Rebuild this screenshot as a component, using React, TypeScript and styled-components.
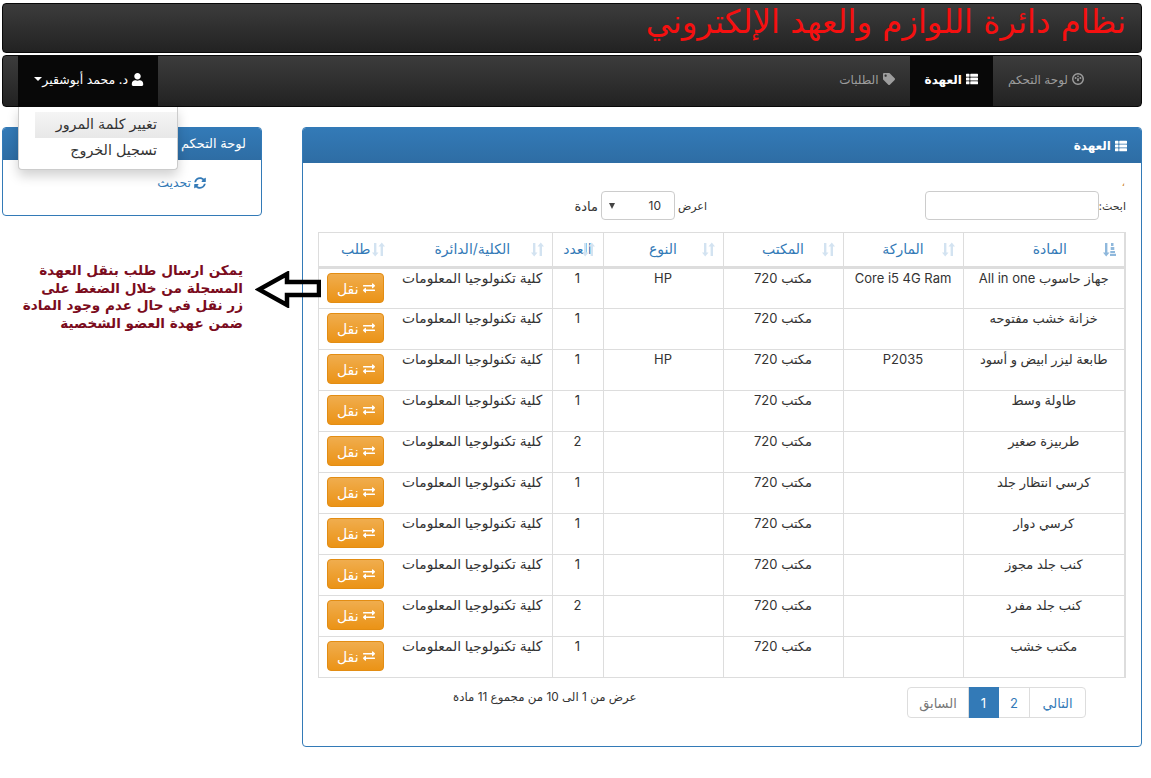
import React from "react";
import styled, { createGlobalStyle } from "styled-components";
import { FaExchangeAlt, FaSyncAlt, FaTag, FaThList, FaUser } from "react-icons/fa";

const GlobalStyle = createGlobalStyle`
  html, body {
    margin: 0;
    padding: 0;
    background: #fff;
  }
  body {
    font-family: Inter, "DejaVu Sans", sans-serif;
    font-size: 13px;
    color: #333;
  }
`;

const rows = [
  ["جهاز حاسوب All in one", "Core i5 4G Ram", "مكتب 720", "HP", "1"],
  ["خزانة خشب مفتوحه", "", "مكتب 720", "", "1"],
  ["طابعة ليزر ابيض و أسود", "P2035", "مكتب 720", "HP", "1"],
  ["طاولة وسط", "", "مكتب 720", "", "1"],
  ["طربيزة صغير", "", "مكتب 720", "", "2"],
  ["كرسي انتظار جلد", "", "مكتب 720", "", "1"],
  ["كرسي دوار", "", "مكتب 720", "", "1"],
  ["كنب جلد مجوز", "", "مكتب 720", "", "1"],
  ["كنب جلد مفرد", "", "مكتب 720", "", "2"],
  ["مكتب خشب", "", "مكتب 720", "", "1"],
];

const SortIcon = ({ active }: { active?: boolean }) => (
  <SortSvg viewBox="0 0 13 15" $active={active}>
    <path d="M2 1h2.4v9.5H6.5L3.2 14.5 0 10.5h2z" />
    {active ? (
      <path d="M8 1h2.5v3H8zM7.7 5h3.6v3H7.7zM7.3 9H12v2H7.3zM7 11.7h6v2.3H7z" />
    ) : (
      <path d="M9.8 .5L13 4.5h-2V14H8.6V4.5H6.5z" />
    )}
  </SortSvg>
);

// glyphicon-dashboard: a ring with dial dots and a needle
const DashboardIcon = () => (
  <svg viewBox="0 0 12 12" width={12} height={12} fill="currentColor">
    <path
      fillRule="evenodd"
      d="M6 0a6 6 0 1 1 0 12A6 6 0 0 1 6 0zm0 1.5a4.5 4.5 0 1 0 0 9 4.5 4.5 0 0 0 0-9z"
    />
    <circle cx="3.6" cy="5" r="1" />
    <circle cx="8.4" cy="5" r="1" />
    <circle cx="6" cy="3.4" r=".8" />
    <path d="M5 7.2a1 1 0 0 0 2 0L6.5 5h-1z" />
  </svg>
);

const App = () => {
  return (
    <Page dir="rtl">
      <GlobalStyle />
      <TitleBar>
        <Title>نظام دائرة اللوازم والعهد الإلكتروني</Title>
      </TitleBar>
      <Navbar>
        <NavLinks>
          <NavItem>
            <DashboardIcon /> لوحة التحكم
          </NavItem>
          <NavItem $active>
            <FaThList size={12} /> العهدة
          </NavItem>
          <NavItem>
            <FaTag size={12} /> الطلبات
          </NavItem>
        </NavLinks>
        <UserMenu>
          <UserToggle>
            <FaUser size={13} /> د. محمد أبوشقير
            <Caret />
          </UserToggle>
          <Dropdown>
            <DropdownItem $hover>تغيير كلمة المرور</DropdownItem>
            <DropdownItem>تسجيل الخروج</DropdownItem>
          </Dropdown>
        </UserMenu>
      </Navbar>

      <Columns>
        <MainPanel>
          <PanelHeading>
            <FaThList size={12} /> العهدة
          </PanelHeading>
          <PanelBody>
            <Tick>،</Tick>
            <Controls>
              <SearchLabel>
                ابحث:
                <SearchInput />
              </SearchLabel>
              <LengthLabel>
                <LengthText $size={11}>اعرض</LengthText>
                <LengthSelect>
                  <span>10</span>
                  <SelectArrow />
                </LengthSelect>
                <LengthText $size={13}>مادة</LengthText>
              </LengthLabel>
            </Controls>
            <Table>
              <colgroup>
                <col width={162} />
                <col width={120} />
                <col width={120} />
                <col width={120} />
                <col width={51} />
                <col width={159} />
                <col width={75} />
              </colgroup>
              <thead>
                <tr>
                  <HeadCell>
                    المادة
                    <SortIcon active />
                  </HeadCell>
                  <HeadCell>
                    الماركة
                    <SortIcon />
                  </HeadCell>
                  <HeadCell>
                    المكتب
                    <SortIcon />
                  </HeadCell>
                  <HeadCell>
                    النوع
                    <SortIcon />
                  </HeadCell>
                  <HeadCell>
                    العدد
                    <SortIcon />
                  </HeadCell>
                  <HeadCell $open>
                    الكلية/الدائرة
                    <SortIcon />
                  </HeadCell>
                  <HeadCell $closed>
                    طلب
                    <SortIcon />
                  </HeadCell>
                </tr>
              </thead>
              <tbody>
                {rows.map((r, i) => (
                  <tr key={i}>
                    {r.map((c, j) => (
                      <Cell key={j}>{c}</Cell>
                    ))}
                    <Cell $open>كلية تكنولوجيا المعلومات</Cell>
                    <Cell $closed>
                      <MoveButton>
                        <FaExchangeAlt size={12} /> نقل
                      </MoveButton>
                    </Cell>
                  </tr>
                ))}
              </tbody>
            </Table>
            <Footer>
              <Pagination>
                <PageLink $kind="next">التالي</PageLink>
                <PageLink $kind="num">2</PageLink>
                <PageLink $kind="current">1</PageLink>
                <PageLink $kind="prev">السابق</PageLink>
              </Pagination>
              <Info>عرض من 1 الى 10 من مجموع 11 مادة</Info>
            </Footer>
          </PanelBody>
        </MainPanel>

        <SideColumn>
          <SidePanel>
            <SideHeading>لوحة التحكم</SideHeading>
            <SideBody>
              <RefreshLink>
                <FaSyncAlt size={12} /> تحديث
              </RefreshLink>
            </SideBody>
          </SidePanel>
          <Note>
            يمكن ارسال طلب بنقل العهدة
            <br />
            المسجلة من خلال الضغط على
            <br />
            زر نقل في حال عدم وجود المادة
            <br />
            ضمن عهدة العضو الشخصية
          </Note>
        </SideColumn>
      </Columns>

      <Arrow viewBox="0 0 66 37">
        <path
          d="M64 11H32V3L4 18.5 32 34V24h32z"
          fill="none"
          stroke="#000"
          strokeWidth="4.5"
        />
      </Arrow>
    </Page>
  );
};

export default App;

const widths: Record<string, string> = { next: "57px", num: "32px", current: "31px", prev: "62px" };

const Page = styled.div`
  position: relative;
  width: 1151px;
  height: 778px;
  overflow: hidden;
  box-sizing: border-box;
  padding: 3px 9px 0 2px;
`;

const TitleBar = styled.div`
  height: 50px;
  box-sizing: border-box;
  border: 1px solid #080808;
  border-radius: 4px;
  background: linear-gradient(to bottom, #3c3c3c, #222);
  padding: 0 15px;
`;

const Title = styled.h1`
  margin: 0;
  font-family: "DejaVu Sans", sans-serif;
  font-size: 32.3px;
  font-weight: 400;
  line-height: 36px;
  color: #f51010;
`;

const Navbar = styled.div`
  display: flex;
  justify-content: space-between;
  height: 52px;
  margin-top: 2px;
  box-sizing: border-box;
  border: 1px solid #080808;
  border-radius: 4px;
  background: linear-gradient(to bottom, #3c3c3c, #222);
  padding: 0 15px;
`;

const NavLinks = styled.div`
  display: flex;
  margin-right: 27px;
`;

const NavItem = styled.div<{ $active?: boolean }>`
  display: flex;
  align-items: center;
  gap: 4px;
  padding: 0 15px 4px;
  font-size: 12px;
  color: ${(p) => (p.$active ? "#fff" : "#9d9d9d")};
  background: ${(p) => (p.$active ? "#080808" : "transparent")};
  font-weight: ${(p) => (p.$active ? 700 : 400)};
`;

const UserMenu = styled.div`
  position: relative;
  display: flex;
`;

const UserToggle = styled.div`
  display: flex;
  align-items: center;
  gap: 3px;
  width: 140px;
  box-sizing: border-box;
  padding: 0 14px 4px 0;
  background: #080808;
  color: #fff;
  font-size: 12.5px;
`;

const Caret = styled.span`
  width: 0;
  height: 0;
  margin-right: -3px;
  border-left: 4px solid transparent;
  border-right: 4px solid transparent;
  border-top: 4px solid #fff;
`;

const Dropdown = styled.div`
  position: absolute;
  top: 51px;
  left: 0;
  z-index: 5;
  width: 160px;
  height: 63px;
  box-sizing: border-box;
  padding: 5px 0;
  background: #fff;
  border: 1px solid #ccc;
  border-top: 0;
  border-radius: 0 0 4px 4px;
  box-shadow: 0 6px 12px rgba(0, 0, 0, 0.18);
`;

const DropdownItem = styled.div<{ $hover?: boolean }>`
  height: 26px;
  line-height: 24px;
  margin-left: 16px;
  padding-right: 20px;
  font-size: 14.3px;
  color: #333;
  background: ${(p) => (p.$hover ? "linear-gradient(to bottom, #f5f5f5, #e8e8e8)" : "transparent")};
`;

const Columns = styled.div`
  display: flex;
  gap: 40px;
  margin-top: 20px;
  align-items: flex-start;
`;

const MainPanel = styled.div`
  width: 840px;
  height: 620px;
  box-sizing: border-box;
  border: 1px solid #337ab7;
  border-radius: 4px;
  overflow: hidden;
`;

const PanelHeading = styled.div`
  display: flex;
  align-items: center;
  gap: 4px;
  height: 35px;
  padding: 0 14px;
  color: #fff;
  font-size: 12px;
  font-weight: 700;
  background: linear-gradient(to bottom, #337ab7, #2e6da4);
`;

const PanelBody = styled.div`
  position: relative;
  padding: 28px 15px 0;
`;

const Tick = styled.span`
  position: absolute;
  top: 13px;
  right: 16px;
  font-size: 10px;
  color: #c87a20;
`;

const Controls = styled.div`
  display: flex;
  align-items: center;
  height: 29px;
  margin-bottom: 12px;
  font-size: 12px;
`;

const SearchLabel = styled.label`
  display: flex;
  align-items: center;
  width: 434px;
  font-size: 11px;
`;

const SearchInput = styled.div`
  width: 174px;
  height: 29px;
  box-sizing: border-box;
  border: 1px solid #ccc;
  border-radius: 4px;
`;

const LengthLabel = styled.label`
  display: flex;
  align-items: center;
  gap: 3px;
  margin-right: -15px;
`;

const LengthText = styled.span<{ $size: number }>`
  font-size: ${(p) => p.$size}px;
`;

const LengthSelect = styled.div`
  display: flex;
  align-items: center;
  justify-content: space-between;
  width: 74px;
  height: 29px;
  box-sizing: border-box;
  padding: 0 13px 0 4px;
  border: 1px solid #ccc;
  border-radius: 4px;
  font-size: 12px;
`;

const SelectArrow = styled.span`
  width: 0;
  height: 0;
  border-left: 3px solid transparent;
  border-right: 3px solid transparent;
  border-top: 6px solid #444;
  margin-left: 3px;
`;

const Table = styled.table`
  width: 808px;
  table-layout: fixed;
  border-collapse: collapse;
  border: 1px solid #ddd;
  border-right-width: 2px;
  font-size: 13px;
`;

const HeadCell = styled.th<{ $open?: boolean; $closed?: boolean }>`
  position: relative;
  height: 35px;
  padding: 0 0 2px;
  box-sizing: border-box;
  text-align: center;
  font-size: 14px;
  font-weight: 400;
  color: #337ab7;
  border: 1px solid #ddd;
  border-bottom: 3px solid #ddd;
  ${(p) => p.$open && "border-left: 0;"}
  ${(p) => p.$closed && "border-right: 0;"}
  &:first-child {
    padding-left: 12px;
  }
`;

const SortSvg = styled.svg<{ $active?: boolean }>`
  position: absolute;
  right: 8px;
  top: 9px;
  width: 13px;
  height: 15px;
  fill: ${(p) => (p.$active ? "#8fb8dc" : "#d3e3f1")};
`;

const Cell = styled.td<{ $open?: boolean; $closed?: boolean }>`
  height: 41px;
  padding: ${(p) => (p.$closed ? "4px" : "1px")} 0 0;
  box-sizing: border-box;
  vertical-align: top;
  text-align: center;
  border: 1px solid #ddd;
  color: #333;
  ${(p) => p.$open && "border-left: 0; font-size: 13.8px;"}
  ${(p) => p.$closed && "border-right: 0;"}
`;

const MoveButton = styled.div`
  display: inline-flex;
  align-items: center;
  justify-content: center;
  gap: 4px;
  width: 57px;
  height: 30px;
  box-sizing: border-box;
  border: 1px solid #e38d13;
  border-radius: 4px;
  color: #fff;
  font-size: 14px;
  background: linear-gradient(to bottom, #f0ad4e, #eb9316);
`;

const Footer = styled.div`
  display: flex;
  align-items: flex-start;
  justify-content: space-between;
  padding: 9px 40px 0 135px;
`;

const Pagination = styled.div`
  display: flex;
  height: 31px;
`;

const PageLink = styled.div<{ $kind: string }>`
  display: flex;
  align-items: center;
  justify-content: center;
  box-sizing: border-box;
  width: ${(p) => widths[p.$kind]};
  margin-left: -1px;
  font-size: 13px;
  border: 1px solid ${(p) => (p.$kind === "current" ? "#337ab7" : "#ddd")};
  color: ${(p) => (p.$kind === "current" ? "#fff" : p.$kind === "prev" ? "#777" : "#337ab7")};
  background: ${(p) => (p.$kind === "current" ? "#337ab7" : "#fff")};
  border-radius: ${(p) => (p.$kind === "next" ? "0 4px 4px 0" : p.$kind === "prev" ? "4px 0 0 4px" : "0")};
`;

const Info = styled.div`
  font-size: 11.8px;
  line-height: 20px;
`;

const SideColumn = styled.div`
  width: 260px;
`;

const SidePanel = styled.div`
  height: 89px;
  box-sizing: border-box;
  border: 1px solid #337ab7;
  border-radius: 4px;
  overflow: hidden;
`;

const SideHeading = styled.div`
  height: 32px;
  line-height: 30px;
  padding: 0 15px;
  color: #fff;
  font-size: 13px;
  font-weight: 400;
  background: linear-gradient(to bottom, #337ab7, #2e6da4);
`;

const SideBody = styled.div`
  padding: 15px 55px 0 0;
`;

const RefreshLink = styled.span`
  display: inline-flex;
  align-items: center;
  gap: 3px;
  color: #337ab7;
  font-size: 12.5px;
`;

const Note = styled.div`
  margin: 46px 19px 0 0;
  font-family: "DejaVu Sans", sans-serif;
  font-size: 13.6px;
  line-height: 17.5px;
  font-weight: 700;
  color: #7b0c1d;
`;

const Arrow = styled.svg`
  position: absolute;
  left: 255px;
  top: 271px;
  width: 66px;
  height: 37px;
`;
